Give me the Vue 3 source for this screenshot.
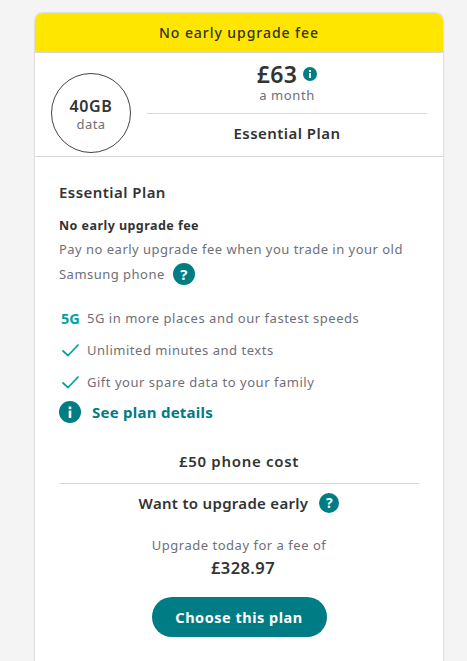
<script setup>
const features = ["Unlimited minutes and texts", "Gift your spare data to your family"];
</script>

<template>
  <div class="page">
    <div class="card">
      <div class="banner">No early upgrade fee</div>

      <div class="head">
        <div class="circle">
          <strong>40GB</strong>
          <span>data</span>
        </div>
        <div class="summary">
          <div class="price-box">
            <div class="price">
              <strong>£63</strong>
              <svg class="mini-info" viewBox="0 0 14 14">
                <circle cx="7" cy="7" r="7" fill="#007c85" />
                <rect x="6" y="6" width="2" height="5" fill="#fff" />
                <rect x="6" y="3" width="2" height="2" fill="#fff" />
              </svg>
            </div>
            <div class="month">a month</div>
          </div>
          <div class="plan-name">Essential Plan</div>
        </div>
      </div>

      <div class="body">
        <h2>Essential Plan</h2>
        <h3>No early upgrade fee</h3>
        <p class="copy">Pay no early upgrade fee when you trade in your old</p>
        <p class="copy samsung">
          Samsung phone
          <span class="help">?</span>
        </p>

        <ul class="features">
          <li>
            <span class="five-g">5G</span>
            <span>5G in more places and our fastest speeds</span>
          </li>
          <li v-for="item in features" :key="item">
            <svg class="tick" viewBox="0 0 18 14">
              <path d="M1 7.5 L6.5 12.5 L17 1.5" fill="none" stroke="#00a3a6" stroke-width="1.7" />
            </svg>
            <span>{{ item }}</span>
          </li>
        </ul>

        <a class="details" href="#">
          <svg viewBox="0 0 22 22">
            <circle cx="11" cy="11" r="11" fill="#007c85" />
            <rect x="9.7" y="9.5" width="2.6" height="7.5" fill="#fff" />
            <rect x="9.7" y="5.5" width="2.6" height="2.6" fill="#fff" />
          </svg>
          See plan details
        </a>

        <div class="phone-cost">£50 phone cost</div>
        <div class="upgrade">
          <span>Want to upgrade early</span>
          <span class="help small">?</span>
        </div>
        <div class="fee-label">Upgrade today for a fee of</div>
        <div class="fee">£328.97</div>
        <button class="choose">Choose this plan</button>
      </div>
    </div>
  </div>
</template>

<style scoped>
.page {
  height: 661px;
  overflow: hidden;
  background: #f4f4f4;
  padding: 13px 24px 0 35px;
  box-sizing: border-box;
  font-family: "Noto Sans", "Open Sans", sans-serif;
  color: #333;
}

.card {
  background: #fff;
  border-radius: 8px 8px 0 0;
  box-shadow: 0 0 2px rgba(0, 0, 0, 0.3);
  height: 660px;
}

.banner {
  height: 39px;
  line-height: 39px;
  background: #ffe600;
  border-radius: 8px 8px 0 0;
  border-bottom: 1px solid #d8d8d8;
  text-align: center;
  font-size: 14px;
  font-weight: 500;
  letter-spacing: 0.95px;
}

.head {
  height: 103px;
  display: flex;
  gap: 16px;
  padding: 0 16px;
  border-bottom: 1px solid #d8d8d8;
}

.circle {
  width: 80px;
  height: 80px;
  margin-top: 20px;
  flex: none;
  box-sizing: border-box;
  border: 1px solid #444;
  border-radius: 50%;
  display: flex;
  flex-direction: column;
  align-items: center;
  justify-content: center;
  padding-top: 3px;
}

.circle strong {
  font-size: 16px;
  font-weight: 600;
  line-height: 19px;
  letter-spacing: 0.6px;
}

.circle span {
  font-size: 13px;
  line-height: 17px;
  color: #6f6f78;
  letter-spacing: 0.4px;
}

.summary {
  flex: 1;
  text-align: center;
}

.price-box {
  height: 61px;
  padding-top: 8px;
  border-bottom: 1px solid #d8d8d8;
  box-sizing: border-box;
}

.price {
  display: flex;
  justify-content: center;
  align-items: center;
  gap: 6px;
  height: 26px;
}

.price strong {
  font-size: 23px;
  font-weight: 600;
  line-height: 26px;
  letter-spacing: 0.3px;
}

.mini-info {
  width: 14px;
  height: 14px;
}

.month {
  font-size: 13px;
  line-height: 16px;
  color: #6f6f78;
  letter-spacing: 0.6px;
}

.plan-name {
  font-size: 15px;
  font-weight: 600;
  line-height: 38px;
  letter-spacing: 0.45px;
}

.body {
  padding: 24px 24px 0;
}

h2 {
  margin: 0;
  font-size: 15px;
  font-weight: 600;
  line-height: 22px;
  letter-spacing: 0.45px;
}

h3 {
  margin: 13px 0 0;
  font-size: 12.5px;
  font-weight: 700;
  line-height: 20px;
  letter-spacing: 0.45px;
}

.copy {
  margin: 3px 0 0;
  font-size: 13px;
  line-height: 21px;
  color: #6f6f78;
  letter-spacing: 0.48px;
  white-space: nowrap;
}

.samsung {
  margin-top: 3px;
  display: flex;
  align-items: center;
  gap: 8px;
}

.help {
  width: 22px;
  height: 22px;
  border-radius: 50%;
  background: #007c85;
  color: #fff;
  font-size: 15px;
  font-weight: 700;
  line-height: 22px;
  text-align: center;
  letter-spacing: 0;
  flex: none;
}

.help.small {
  width: 20px;
  height: 20px;
  font-size: 14px;
  line-height: 20px;
}

.features {
  list-style: none;
  margin: 17px 0 0;
  padding: 0;
}

.features li {
  height: 32px;
  display: flex;
  align-items: center;
  gap: 7px;
  font-size: 13px;
  color: #6f6f78;
  letter-spacing: 0.52px;
}

.five-g,
.tick {
  width: 19px;
  margin-left: 2px;
  flex: none;
}

.five-g {
  font-size: 14.5px;
  font-weight: 700;
  color: #00a3a6;
  letter-spacing: 0;
}

.tick {
  height: 14px;
}

.details {
  display: flex;
  align-items: center;
  gap: 11px;
  height: 22px;
  margin-top: 3px;
  color: #007c85;
  font-size: 15px;
  font-weight: 700;
  letter-spacing: 0.25px;
  text-decoration: none;
}

.details svg {
  width: 22px;
  height: 22px;
}

.phone-cost {
  margin: 27px 0 0;
  height: 33px;
  line-height: 22px;
  text-align: center;
  font-size: 15px;
  font-weight: 600;
  letter-spacing: 0.7px;
  border-bottom: 1px solid #d8d8d8;
}

.upgrade {
  display: flex;
  justify-content: center;
  align-items: center;
  gap: 11px;
  height: 38px;
  font-size: 15px;
  font-weight: 600;
  letter-spacing: 0.3px;
}

.fee-label {
  margin-top: 12px;
  text-align: center;
  font-size: 13px;
  line-height: 22px;
  color: #6f6f78;
  letter-spacing: 0.52px;
}

.fee {
  margin-top: 1px;
  padding-left: 8px;
  text-align: center;
  font-size: 16.5px;
  font-weight: 600;
  line-height: 22px;
  letter-spacing: 0.4px;
}

.choose {
  display: block;
  width: 175px;
  height: 40px;
  margin: 18px auto 0;
  border: 0;
  border-radius: 20px;
  background: #007c85;
  color: #fff;
  font-family: inherit;
  font-size: 14.5px;
  font-weight: 700;
  letter-spacing: 0.5px;
}
</style>
